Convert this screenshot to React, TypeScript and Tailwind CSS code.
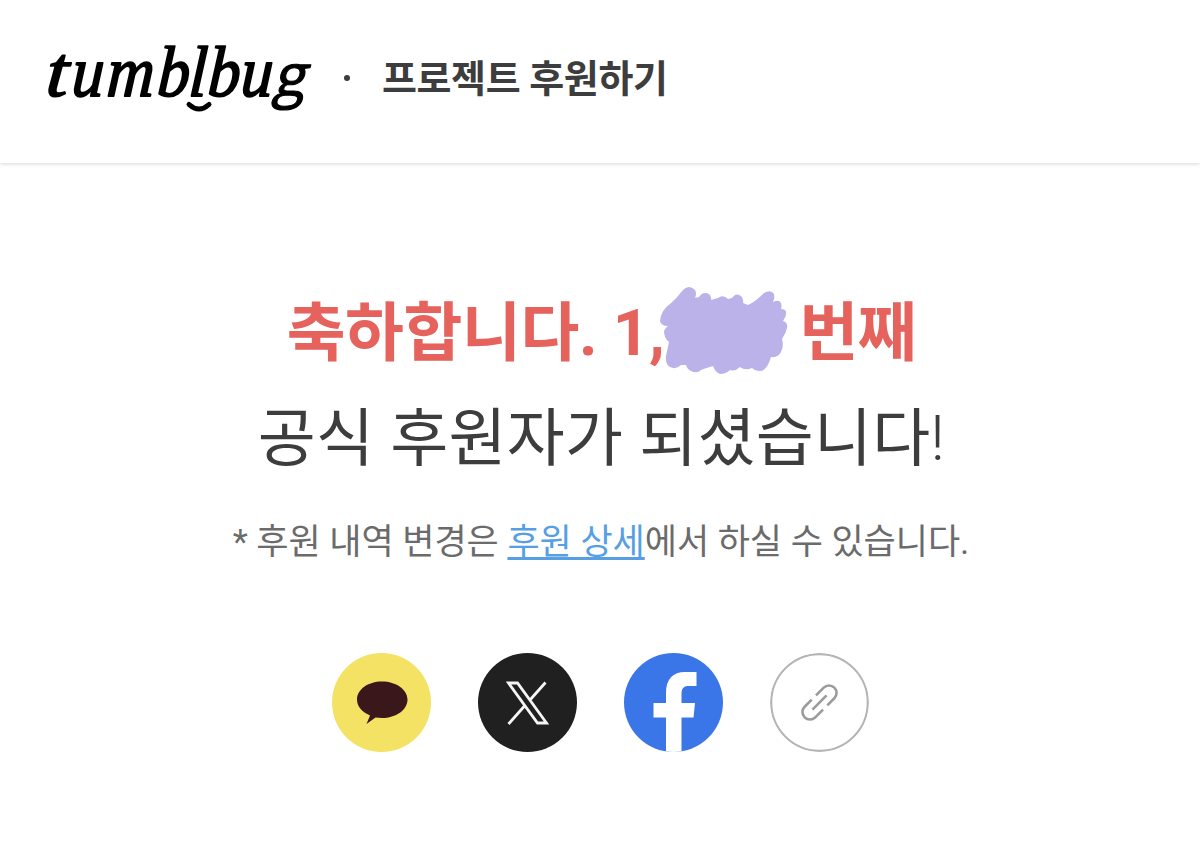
import type { ReactNode } from "react";

const WORDMARK = [
  { char: "t", x: 45, scale: 1.1 },
  { char: "u", x: 71, scale: 0.89 },
  { char: "m", x: 106, scale: 0.91 },
  { char: "b", x: 156.5, scale: 0.9 },
  { char: "l", x: 188, scale: 0.9 },
  { char: "b", x: 207, scale: 0.9 },
  { char: "u", x: 240, scale: 0.89 },
];

function Logo() {
  return (
    <svg
      width="330"
      height="163"
      viewBox="0 0 330 163"
      role="img"
      aria-label="tumblbug"
      className="shrink-0 fill-black stroke-black"
    >
      {WORDMARK.map(({ char, x, scale }, i) => (
        <text
          key={i}
          transform={`translate(${x} 95.5) scale(${scale} 1) skewX(-4)`}
          strokeWidth="1.8"
          strokeLinejoin="round"
          className="font-['Liberation_Serif',serif] text-[72px] italic"
        >
          {char}
        </text>
      ))}
      <text
        transform="translate(272.5 96) scale(1.06 1.04) skewX(-13)"
        strokeWidth="1"
        strokeLinejoin="round"
        className="font-['Open_Sans',sans-serif] text-[56px]"
      >
        g
      </text>
      <path
        d="M189 104.500Q199 113.500 209 104.500"
        fill="none"
        strokeWidth="5"
        strokeLinecap="round"
      />
    </svg>
  );
}

function Scribble() {
  return (
    <svg
      width="130"
      height="90"
      viewBox="660 286 130 90"
      className="absolute -left-[4px] top-[5px] fill-[#bbb2e9]"
      aria-hidden="true"
    >
      <path d="M683 290Q689 284 695 290Q697 293 695 298L699 297Q703 291 709 294Q712 297 711 300L718 298Q723 294 728 299L732 298Q736 292 741 296Q744 299 743 303L748 305Q755 302 764 293Q771 289 774 294Q775 298 773 302Q779 299 781 303Q782 306 781 309Q787 309 786 314Q786 317 783 321Q788 322 787 328Q786 333 782 339Q784 346 781 352Q778 358 771 357Q767 371 760 371Q755 371 752 368Q745 371 740 367Q735 372 730 370Q726 374 720 374Q715 372 713 366Q706 368 701 370Q697 374 691 371Q687 369 686 365L681 365Q676 370 670 367Q665 364 666 356L669 342Q664 338 664 331Q665 328 668 326Q661 326 660 321Q661 310 670 304Q677 298 683 290Z" />
    </svg>
  );
}

function ShareButton({
  label,
  className,
  children,
}: {
  label: string;
  className: string;
  children: ReactNode;
}) {
  return (
    <button
      type="button"
      aria-label={label}
      className={`size-[99px] overflow-hidden rounded-full ${className}`}
    >
      <svg viewBox="0 0 99 99" className="size-[99px]">
        {children}
      </svg>
    </button>
  );
}

export default function App() {
  return (
    <div className="h-[860px] w-[1200px] overflow-hidden bg-white font-['Roboto','Noto_Sans_CJK_KR',sans-serif] text-[#3d3d3d]">
      <header className="flex h-[163px] items-start shadow-[0_1px_4px_rgba(0,0,0,0.16)]">
        <Logo />
        <span className="mt-[75px] ml-[14px] size-[6px] shrink-0 rounded-full bg-[#3d3d3d]" />
        <h1 className="mt-[51px] ml-[32px] text-[38px] leading-[56px] font-bold tracking-[-0.4px] whitespace-nowrap">
          프로젝트 후원하기
        </h1>
      </header>

      <main className="flex flex-col items-center">
        <h2 className="mt-[118px] ml-[3px] text-center text-[64px] leading-[105px] whitespace-nowrap">
          <span className="flex justify-center font-bold tracking-[-0.4px] text-[#e6625c]">
            <span>축하합니다. 1,</span>
            <span className="relative w-[121px]">
              <Scribble />
            </span>
            <span className="ml-[14px]">번째</span>
          </span>
          <span className="block text-[63px] tracking-[0.3px]">
            공식 후원자가 되셨습니다<span className="font-light">!</span>
          </span>
        </h2>
        <p className="mt-[24px] ml-[2px] text-[35px] leading-[56px] tracking-[-0.04px] whitespace-nowrap text-[#6b6b6b]">
          * 후원 내역 변경은{" "}
          <a
            href="#"
            className="text-[#569fe3] underline decoration-[3px] underline-offset-[3px] [text-decoration-skip-ink:none]"
          >
            후원 상세
          </a>
          에서 하실 수 있습니다.
        </p>

        <div className="mt-[82px] ml-[1px] flex gap-[47px]">
          <ShareButton label="카카오톡" className="bg-[#f4e264]">
            <path
              d="M50 28.500C64 28.500 75.500 36.500 75.500 46.500C75.500 57 64 65 50 65L43.500 64.500L34.500 71L38 62.500C30 59 25 53.500 25 46.500C25 36.500 36 28.500 50 28.500Z"
              fill="#3a171a"
            />
          </ShareButton>
          <ShareButton label="X" className="bg-[#202020]">
            <path
              d="M30.500 30H39.500L68.500 70H59.500ZM67.500 29.500L51.500 47.500M46.500 53L30.500 71"
              fill="none"
              stroke="#f5f5f5"
              strokeWidth="2.8"
            />
          </ShareButton>
          <ShareButton label="페이스북" className="bg-[#3a76e8]">
            <path
              d="M42 99V64.500H29.500V50H42V40C42 26 49 19 61 19H72.500V33H65C59.500 33 57.500 35.500 57.500 41V50H71L69.500 64.500H57.500V99Z"
              fill="#fff"
            />
          </ShareButton>
          <ShareButton label="링크 복사" className="bg-white">
            <circle cx="49.500" cy="49.500" r="48.300" fill="none" stroke="#b5b5b5" strokeWidth="2.200" />
            <g
              transform="translate(49.500 49.500) rotate(-45)"
              fill="none"
              stroke="#9b9b9b"
              strokeWidth="2.600"
            >
              <path d="M2.500 -7.500H13.500A7.500 7.500 0 0 1 13.500 7.500H3.500" />
              <path d="M-2.500 7.500H-13.500A7.500 7.500 0 0 1 -13.500 -7.500H-3.500" />
              <path d="M-10 0H10" />
            </g>
          </ShareButton>
        </div>
      </main>
    </div>
  );
}
